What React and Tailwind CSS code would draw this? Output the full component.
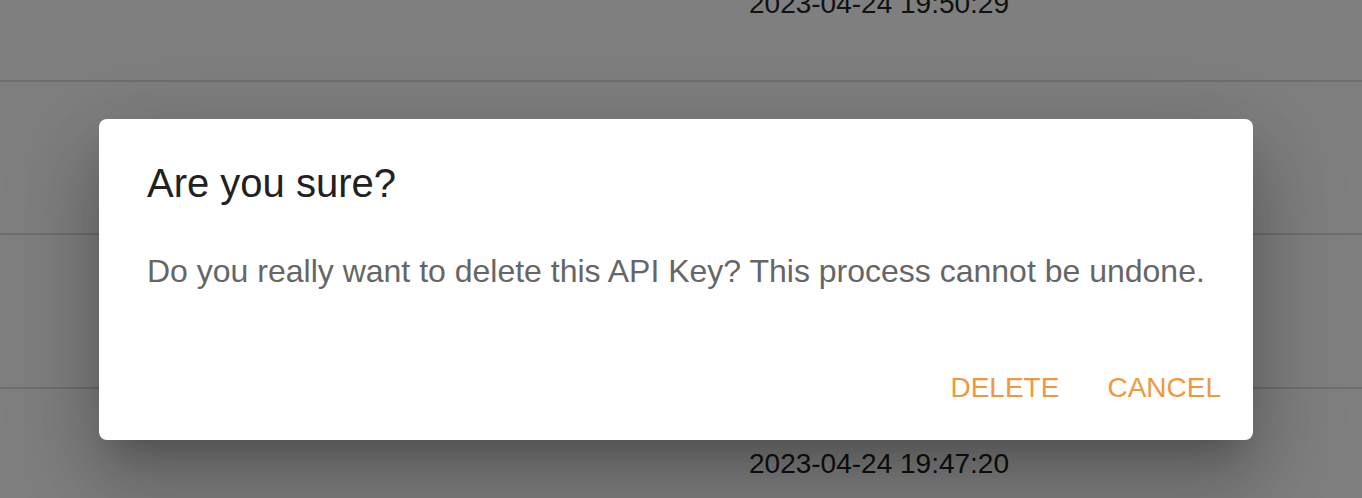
export default function App() {
  const rows = ['2023-04-24 19:50:29', '', '', '2023-04-24 19:47:20']
  return (
    <div className="relative h-[498px] w-[1362px] overflow-hidden bg-white font-['Liberation_Sans',Arial,sans-serif]">
      {/* table behind the dialog */}
      <div className="-mt-[72px]">
        {rows.map((t, i) => (
          <div key={i} className="flex h-[153.5px] items-center border-b-2 border-[#dcdcdc] pl-[749px]">
            <span className="whitespace-nowrap text-[28px] leading-[1.43] text-[#222]">{t}</span>
          </div>
        ))}
      </div>

      {/* backdrop */}
      <div className="absolute inset-0 bg-black/50" />

      {/* dialog */}
      <div className="absolute left-[99px] top-[119px] w-[1154px] rounded-[8px] bg-white shadow-[0_22px_30px_-14px_rgba(0,0,0,0.2),0_48px_76px_6px_rgba(0,0,0,0.14),0_18px_92px_16px_rgba(0,0,0,0.12)]">
        <h2 className="px-[48px] py-[32px] text-[40px] leading-[64px] text-[#212121]">Are you sure?</h2>
        <div className="px-[48px] pb-[40px]">
          <p className="whitespace-nowrap text-[32px] leading-[48px] text-[#666]">
            Do you really want to delete this API Key? This process cannot be undone.
          </p>
        </div>
        <div className="flex justify-end gap-[16px] p-[16px]">
          <button className="px-[16px] py-[12px] text-[28px] leading-[49px] text-[#ee993f]">DELETE</button>
          <button className="px-[16px] py-[12px] text-[28px] leading-[49px] text-[#ee993f]">CANCEL</button>
        </div>
      </div>
    </div>
  )
}
